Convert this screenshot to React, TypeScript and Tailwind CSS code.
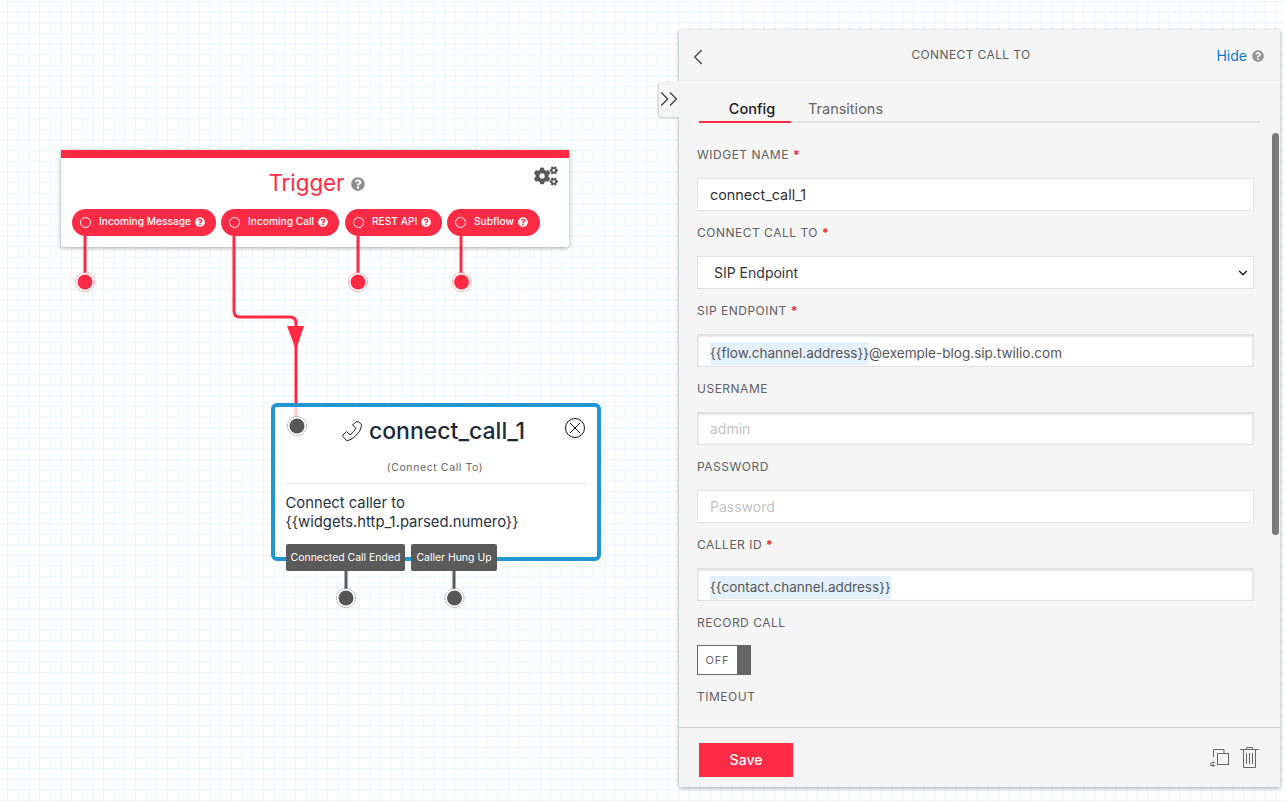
import React from "react";
import { ChevronLeft, ChevronsRight, ChevronDown } from "lucide-react";
import { FaCogs, FaQuestionCircle } from "react-icons/fa";

function Pill({ label, w }: { label: string; w: string }) {
  return (
    <div className={`h-[27px] ${w} shrink-0 rounded-[14px] bg-[#ff2b45] text-white flex items-center pl-[8px] pb-[1px] text-[10.2px] font-medium whitespace-nowrap`}>
      <span className="w-[11px] h-[11px] rounded-full border border-white mr-[8px] shrink-0" />
      <span>{label}</span>
      <FaQuestionCircle className="ml-[4px] w-[10px] h-[10px] shrink-0" />
    </div>
  );
}

function Label({ text, req }: { text: string; req?: boolean }) {
  return (
    <div className="h-[18px] text-[12px] leading-[18px] tracking-[0.5px] text-[#606060] uppercase">
      {text}
      {req && <span className="text-[#f5222d] ml-[4px] font-bold">*</span>}
    </div>
  );
}

function Field({ label, req, inset, children }: { label: string; req?: boolean; inset?: boolean; children: React.ReactNode }) {
  return (
    <div className="h-[78px]">
      <Label text={label} req={req} />
      <div
        className={`mt-[14px] h-[33px] bg-white border border-[#e2e2e2] flex items-center pl-[12px] text-[14px] text-[#555] ${
          inset ? "shadow-[inset_0_1px_3px_rgba(0,0,0,0.18)]" : ""
        }`}
      >
        {children}
      </div>
    </div>
  );
}

export default function App() {
  return (
    <div className="relative w-[1285px] h-[802px] overflow-hidden bg-white font-['Inter',sans-serif] bg-[linear-gradient(to_right,#e9f4fd_1.4px,transparent_1.4px),linear-gradient(to_bottom,#e9f4fd_1.4px,transparent_1.4px)] bg-[size:10.67px_10.67px] bg-[position:7px_1px]">
      {/* Trigger widget */}
      <div className="absolute left-[61px] top-[150px] w-[508px] h-[97px] bg-white rounded-b-[2px] shadow-[0_1px_4px_rgba(0,0,0,0.35)]">
        <div className="h-[8px] bg-[#ff2b45]" />
        <div className="relative h-[51px] flex items-center justify-center pl-[3px] pb-[2px] text-[#ff2b45] text-[22.3px]">
          <span>Trigger</span>
          <FaQuestionCircle className="ml-[6px] mt-[3px] w-[14px] h-[14px] text-[#8d8d8d]" />
          <FaCogs className="absolute right-[11px] top-[6px] w-[24px] h-[24px] text-[#5a5a5a]" />
        </div>
        <div className="flex gap-[5px] pl-[11px]">
          <Pill label="Incoming Message" w="w-[144px]" />
          <Pill label="Incoming Call" w="w-[118px]" />
          <div className="ml-[1px]">
            <Pill label="REST API" w="w-[97px]" />
          </div>
          <Pill label="Subflow" w="w-[93px]" />
        </div>
      </div>

      {/* Connect call widget */}
      <div className="absolute left-[271px] top-[403px] w-[330px] h-[158px] bg-white border-[4px] border-[#2196d2] rounded-[6px]">
        <div className="flex items-center justify-center h-[48px] pr-[6px] text-[23px] font-medium text-[#1c2a3a]">
          <svg width="22" height="22" viewBox="0 0 22 22" fill="none" stroke="#222" strokeWidth="1" strokeLinejoin="round" className="mr-[6px]">
            <path d="M1.5 15.5L5.5 11.5L9 14.8Q12.8 12.2 15 8.2L11.5 5L15.5 1.5Q18 1 20.8 5Q20 11.5 14 16.5Q10 20 6 20.8Q3.5 19 1.5 15.5Z" />
          </svg>
          <span>connect_call_1</span>
        </div>
        <svg width="20" height="20" viewBox="0 0 20 20" fill="none" stroke="#111" strokeWidth="1" className="absolute right-[12px] top-[11px]">
          <circle cx="10" cy="10" r="9.5" />
          <path d="M5 5L15 15M15 5L5 15" />
        </svg>
        <div className="text-center text-[10.5px] tracking-[0.6px] text-[#666] mt-[6px] pr-[2px] leading-[14px]">(Connect Call To)</div>
        <div className="mx-[11px] mt-[8px] border-t border-[#e8e8e8]" />
        <div className="mx-[10.5px] mt-[10px] text-[14.8px] leading-[19px] text-[#26323f]">
          <div>Connect caller to</div>
          <div>{"{{widgets.http_1.parsed.numero}}"}</div>
        </div>
      </div>
      <div className="absolute left-[286px] top-[544px] flex gap-[6px] text-white text-[10.45px]">
        <div className="w-[119px] h-[27px] bg-[#5a5a5a] rounded-[2px] flex items-center justify-center">Connected Call Ended</div>
        <div className="w-[86px] h-[27px] bg-[#5a5a5a] rounded-[2px] flex items-center justify-center">Caller Hung Up</div>
      </div>

      {/* Connectors */}
      <svg className="absolute left-0 top-0 pointer-events-none" width="679" height="802" fill="none">
        <g stroke="#ff2b45" strokeWidth="3">
          <path d="M85 236V282M358 236V282M461 236V282" />
          <path d="M234 236V311Q234 317 240 317H290Q296 317 296 323V403" />
        </g>
        <path d="M287 326H304L296 350Z" fill="#ff2b45" />
        <path d="M296 407V417" stroke="#ff2b45" strokeOpacity="0.25" strokeWidth="3" />
        {[85, 358, 461.5].map((x) => (
          <g key={x}>
            <circle cx={x} cy={282} r={9.5} fill="white" stroke="#ff2b45" strokeWidth="0.6" strokeDasharray="1.5 1" />
            <circle cx={x} cy={282} r={7.5} fill="#ff2b45" />
          </g>
        ))}
        <path d="M346 571V598M454 571V598" stroke="#5a5a5a" strokeWidth="3" />
        {[[297, 426], [346, 598], [454.5, 598]].map(([x, y]) => (
          <g key={x}>
            <circle cx={x} cy={y} r={9.5} fill="white" stroke="#555" strokeWidth="0.6" strokeDasharray="1.5 1" />
            <circle cx={x} cy={y} r={7.5} fill="#565656" />
          </g>
        ))}
      </svg>

      {/* Inspector panel */}
      <div className="absolute left-[679px] top-[30px] w-[601px] h-[757px] bg-[#f5f5f5] shadow-[0_1px_4px_rgba(0,0,0,0.35)] flex flex-col">
        <div className="relative h-[51px] shrink-0 border-b border-[#ebebeb] flex items-center justify-center text-[12px] tracking-[0.38px] text-[#5c5c5c] pr-[17px]">
          <ChevronLeft strokeWidth={1.5} className="absolute left-[6px] top-[14px] w-[26px] h-[26px] text-[#555]" />
          <span>CONNECT CALL TO</span>
          <div className="absolute right-[16px] top-[17px] flex items-center text-[14px] leading-[18px] text-[#0a78d1] tracking-normal">
            Hide
            <FaQuestionCircle className="ml-[5px] w-[12px] h-[12px] text-[#949494]" />
          </div>
        </div>

        <div className="relative flex-1 overflow-hidden">
          <div className="mx-[20px] h-[42px] border-b-2 border-[#e4e4e4] flex text-[14.5px]">
            <div className="w-[92px] h-[42px] border-b-2 border-[#ff2b45] flex items-center justify-center pt-[15px] pl-[14px] font-medium text-[#1a1a1a]">
              Config
            </div>
            <div className="ml-[17px] h-[42px] flex items-center pt-[14px] text-[#666]">Transitions</div>
          </div>
          <div className="pl-[18px] pr-[26px] pt-[23px]">
            <Field label="Widget Name" req>
              <span className="text-[14.4px] text-[#333]">connect_call_1</span>
            </Field>
            <Field label="Connect Call To" req>
              <span className="pl-[4px] text-[#333]">SIP Endpoint</span>
              <ChevronDown strokeWidth={2.5} className="absolute right-[30px] w-[14px] h-[14px] text-[#222]" />
            </Field>
            <Field label="SIP Endpoint" req inset>
              <span className="mt-[5px] text-[13.55px] leading-[23px] bg-[#e3f1fc]">{"{{flow.channel.address}}"}</span>
              <span className="mt-[5px] text-[13.55px] leading-[23px]">@exemple-blog.sip.twilio.com</span>
            </Field>
            <Field label="Username" inset>
              <span className="text-[#c4c4c4]">admin</span>
            </Field>
            <Field label="Password">
              <span className="text-[#c4c4c4]">Password</span>
            </Field>
            <Field label="Caller ID" req inset>
              <span className="mt-[5px] text-[13.55px] leading-[23px] bg-[#e3f1fc]">{"{{contact.channel.address}}"}</span>
            </Field>
            <Label text="Record Call" />
            <div className="mt-[13px] w-[54px] h-[30px] border border-[#666] bg-white flex items-center text-[11px] tracking-[0.8px] text-[#666]">
              <span className="w-[39px] text-center">OFF</span>
              <span className="flex-1 h-full bg-[#666]" />
            </div>
            <div className="mt-[13px]">
              <Label text="Timeout" />
            </div>
          </div>
          <div className="absolute left-[593px] top-[52px] w-[7px] h-[402px] rounded-full bg-[#7a7a7a]" />
        </div>

        <div className="relative h-[60px] shrink-0 border-t border-[#cfcfcf] flex items-center pl-[20px]">
          <div className="mt-[4px] w-[94px] h-[34px] bg-[#ff2b45] text-white text-[14px] font-medium flex items-center justify-center">Save</div>
          <div className="ml-auto mr-[21px] flex items-center gap-[11px] text-[#666]">
            <svg width="20" height="19" viewBox="0 0 20 19" fill="none" stroke="#666" strokeWidth="1">
              <path d="M4.5 9V1.5H15V5" />
              <rect x="8.5" y="5.5" width="11" height="11" />
              <path d="M6 14.5H3A2 2 0 0 0 1.5 16.8" />
              <path d="M5 17.5H1.5" strokeWidth="1.2" />
              <path d="M3.6 16L5.6 17.5L3.6 19" />
            </svg>
            <svg width="19" height="21" viewBox="0 0 19 21" fill="none" stroke="#666" strokeWidth="1">
              <path d="M0 2.5H19M6.5 2.5V.5H12.5V2.5" />
              <path d="M3.5 2.5V20.5H15.5V2.5" />
              <path d="M6.5 6V17M9.5 6V17M12.5 6V17" />
            </svg>
          </div>
        </div>
      </div>

      {/* Collapse tab */}
      <div className="absolute left-[659px] top-[81px] w-[20px] h-[36px] bg-[#f5f5f5] rounded-l-[4px] shadow-[-1px_1px_2px_rgba(0,0,0,0.2)] flex items-center justify-center">
        <ChevronsRight strokeWidth={0.85} className="shrink-0 w-[30px] h-[30px] text-[#333]" />
      </div>
    </div>
  );
}
